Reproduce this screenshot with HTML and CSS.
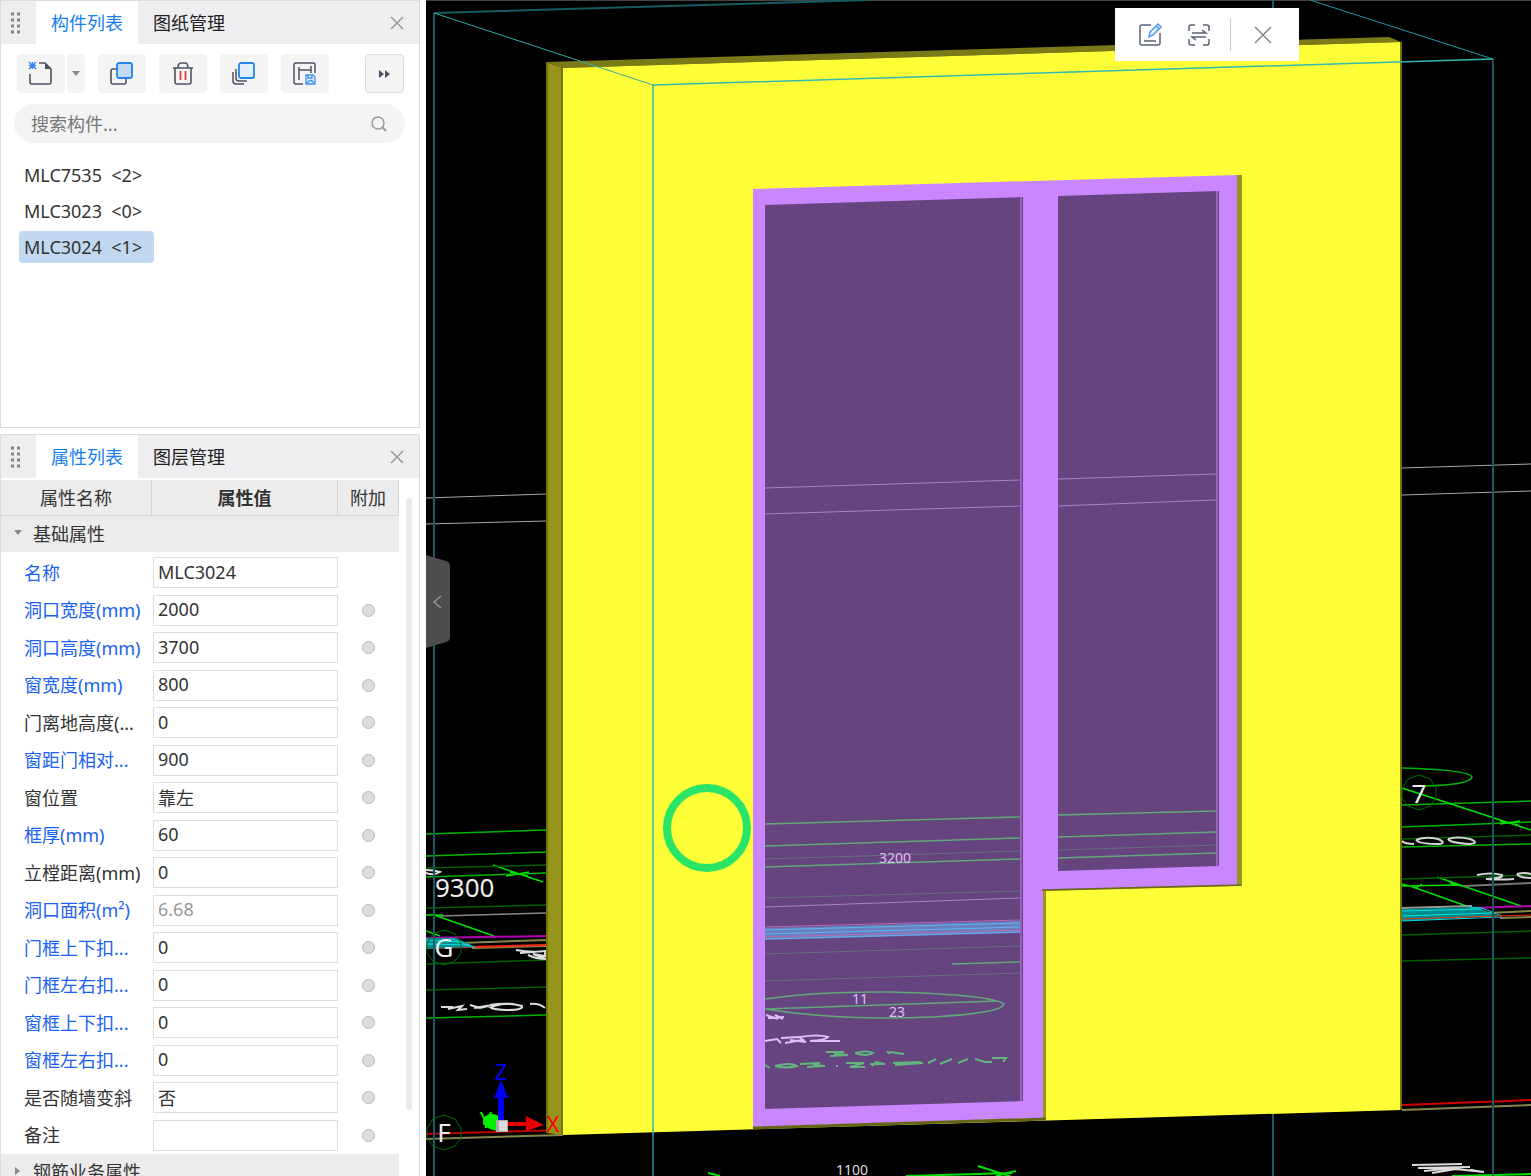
FILE: index.html
```
<!DOCTYPE html>
<html lang="zh-CN">
<head>
    <meta charset="UTF-8">
    <meta name="viewport" content="width=device-width, initial-scale=1.0">
    <title>构件列表</title>
    <link rel="stylesheet" href="styles.css">
</head>
<body>
    <div class="sidebar">
        <!-- Component list panel -->
        <section class="panel component-panel">
            <div class="tab-bar">
                <svg class="grip" width="12" height="24" viewBox="0 0 12 24"><path d="M1 3h3M7 3h3M1 9h3M7 9h3M1 15h3M7 15h3M1 21h3M7 21h3" stroke="#858585" stroke-width="3"/></svg>
                <button class="tab active">构件列表</button>
                <button class="tab">图纸管理</button>
                <button class="close-button" aria-label="关闭"><svg width="14" height="14" viewBox="0 0 14 14"><path d="M1 1l12 12M13 1L1 13" stroke="#999" stroke-width="1.5"/></svg></button>
            </div>
            <div class="toolbar">
                <div class="split-button">
                    <button class="tool" aria-label="新建">
                        <svg width="26" height="26" viewBox="0 0 26 26" fill="none"><path d="M2 13v8q0 2 2 2h17q2 0 2-2V8l-6-6h-6" stroke="#4d5363" stroke-width="1.6"/><path d="M17 2v6h6z" fill="#4d5363"/><path d="M1 1l7 7M8 1L1 8M4.500 1v7M1 4.500h7" stroke="#2f86ee" stroke-width="1.300"/></svg>
                    </button>
                    <button class="tool arrow" aria-label="更多新建"><svg width="8" height="5" viewBox="0 0 8 5"><path d="M0 0h8L4 5z" fill="#8a8a8a"/></svg></button>
                </div>
                <button class="tool" aria-label="复制">
                    <svg width="26" height="26" viewBox="0 0 26 26" fill="none"><rect x="2" y="8" width="15" height="15" rx="2" stroke="#4d5363" stroke-width="1.600"/><rect x="8" y="2" width="15" height="15" rx="2" fill="#c5d9f3" stroke="#2384ee" stroke-width="1.800"/></svg>
                </button>
                <button class="tool" aria-label="删除">
                    <svg width="26" height="26" viewBox="0 0 26 26" fill="none"><path d="M3 7h20M8 7q0-5 3-5h4q3 0 3 5M5 7v14q0 2 2 2h12q2 0 2-2V7" stroke="#4d5363" stroke-width="1.600"/><path d="M10.500 10v9M15.500 10v9" stroke="#e33e45" stroke-width="1.800"/></svg>
                </button>
                <button class="tool" aria-label="层间复制">
                    <svg width="26" height="26" viewBox="0 0 26 26" fill="none"><path d="M2 11v9q0 3 3 3h8M5 8v9q0 3 3 3h8" stroke="#4d5363" stroke-width="1.500"/><rect x="8" y="2" width="15" height="15" rx="2" fill="#e3effc" stroke="#2384ee" stroke-width="1.800"/></svg>
                </button>
                <button class="tool" aria-label="存档">
                    <svg width="26" height="26" viewBox="0 0 26 26" fill="none"><path d="M11 23H4q-2 0-2-2V4q0-2 2-2h17q2 0 2 2v8M7 6v13M19 5v7M7 9h12" stroke="#4d5363" stroke-width="1.500"/><path d="M14 14h7l2 2v7h-9zM16 14v3h4v-3M15 22q4-5 7 0" fill="#dcebfd" stroke="#3f91f0" stroke-width="1.300"/></svg>
                </button>
                <button class="tool more" aria-label="展开"><svg width="12" height="8" viewBox="0 0 12 8"><path d="M0 0l5 4-5 4zM6 0l5 4-5 4z" fill="#4b5060"/></svg></button>
            </div>
            <div class="search">
                <input type="text" class="search-input" placeholder="搜索构件..." aria-label="搜索构件">
                <svg width="16" height="16" viewBox="0 0 16 16" fill="none"><circle cx="7" cy="7" r="6" stroke="#999" stroke-width="1.500"/><path d="M11 11l4 4" stroke="#999" stroke-width="2"/></svg>
            </div>
            <ul class="component-list">
                <li>MLC7535&nbsp; &lt;2&gt;</li>
                <li>MLC3023&nbsp; &lt;0&gt;</li>
                <li class="selected">MLC3024&nbsp; &lt;1&gt;</li>
            </ul>
        </section>

        <!-- Property panel -->
        <section class="panel property-panel">
            <div class="tab-bar">
                <svg class="grip" width="12" height="24" viewBox="0 0 12 24"><path d="M1 3h3M7 3h3M1 9h3M7 9h3M1 15h3M7 15h3M1 21h3M7 21h3" stroke="#858585" stroke-width="3"/></svg>
                <button class="tab active">属性列表</button>
                <button class="tab">图层管理</button>
                <button class="close-button" aria-label="关闭"><svg width="14" height="14" viewBox="0 0 14 14"><path d="M1 1l12 12M13 1L1 13" stroke="#999" stroke-width="1.5"/></svg></button>
            </div>
            <div class="property-body">
                <table class="properties">
                    <colgroup><col class="col-name"><col class="col-value"><col class="col-extra"></colgroup>
                    <thead>
                        <tr><th>属性名称</th><th class="strong">属性值</th><th>附加</th></tr>
                        <tr class="group"><td colspan="3"><svg width="8" height="8" viewBox="0 0 8 8"><path d="M0 1h8L4 6z" fill="#888"/></svg>基础属性</td></tr>
                    </thead>
                    <tbody>
                        <tr><td><label class="blue" for="p1">名称</label></td><td><input type="text" id="p1" value="MLC3024"></td><td></td></tr>
                        <tr><td><label class="blue" for="p2">洞口宽度(mm)</label></td><td><input type="text" id="p2" value="2000"></td><td><input type="checkbox" aria-label="附加 洞口宽度"></td></tr>
                        <tr><td><label class="blue" for="p3">洞口高度(mm)</label></td><td><input type="text" id="p3" value="3700"></td><td><input type="checkbox" aria-label="附加 洞口高度"></td></tr>
                        <tr><td><label class="blue" for="p4">窗宽度(mm)</label></td><td><input type="text" id="p4" value="800"></td><td><input type="checkbox" aria-label="附加 窗宽度"></td></tr>
                        <tr><td><label for="p5">门离地高度(...</label></td><td><input type="text" id="p5" value="0"></td><td><input type="checkbox" aria-label="附加 门离地高度"></td></tr>
                        <tr><td><label class="blue" for="p6">窗距门相对...</label></td><td><input type="text" id="p6" value="900"></td><td><input type="checkbox" aria-label="附加 窗距门相对"></td></tr>
                        <tr><td><label for="p7">窗位置</label></td><td><input type="text" id="p7" value="靠左"></td><td><input type="checkbox" aria-label="附加 窗位置"></td></tr>
                        <tr><td><label class="blue" for="p8">框厚(mm)</label></td><td><input type="text" id="p8" value="60"></td><td><input type="checkbox" aria-label="附加 框厚"></td></tr>
                        <tr><td><label for="p9">立樘距离(mm)</label></td><td><input type="text" id="p9" value="0"></td><td><input type="checkbox" aria-label="附加 立樘距离"></td></tr>
                        <tr><td><label class="blue" for="p10">洞口面积(m²)</label></td><td><input type="text" id="p10" class="readonly" value="6.68" readonly></td><td><input type="checkbox" aria-label="附加 洞口面积"></td></tr>
                        <tr><td><label class="blue" for="p11">门框上下扣...</label></td><td><input type="text" id="p11" value="0"></td><td><input type="checkbox" aria-label="附加 门框上下扣"></td></tr>
                        <tr><td><label class="blue" for="p12">门框左右扣...</label></td><td><input type="text" id="p12" value="0"></td><td><input type="checkbox" aria-label="附加 门框左右扣"></td></tr>
                        <tr><td><label class="blue" for="p13">窗框上下扣...</label></td><td><input type="text" id="p13" value="0"></td><td><input type="checkbox" aria-label="附加 窗框上下扣"></td></tr>
                        <tr><td><label class="blue" for="p14">窗框左右扣...</label></td><td><input type="text" id="p14" value="0"></td><td><input type="checkbox" aria-label="附加 窗框左右扣"></td></tr>
                        <tr><td><label for="p15">是否随墙变斜</label></td><td><input type="text" id="p15" value="否"></td><td><input type="checkbox" aria-label="附加 是否随墙变斜"></td></tr>
                        <tr><td><label for="p16">备注</label></td><td><input type="text" id="p16" value=""></td><td><input type="checkbox" aria-label="附加 备注"></td></tr>
                    </tbody>
                    <tfoot>
                        <tr class="group"><td colspan="3"><svg width="8" height="8" viewBox="0 0 8 8"><path d="M1 0v8l5-4z" fill="#888"/></svg>钢筋业务属性</td></tr>
                    </tfoot>
                </table>
                <div class="scrollbar"></div>
            </div>
        </section>
    </div>

    <!-- 3D view -->
    <main class="viewport">
        <svg class="scene" viewBox="426 0 1105 1176" preserveAspectRatio="xMinYMin slice" fill="none">
            <!-- Level lines behind the wall -->
            <path d="M426 .5H1531" stroke="#444"/>
            <path d="M426 498l120-4M426 524l120-3M1402 468l129-4M1402 495l129-4" stroke="#aaa"/>

            <!-- Axis grid, left of the wall -->
            <g stroke="#00b400" stroke-width="1.500">
                <path d="M426 834l120-4M426 856l120-4M426 877l120-4M426 1018l120-3"/>
                <path d="M493 865l50 17M506 876l23-4M510 872l18 4M426 915l17 0M434 915l60 21M426 931l14 5" stroke="#00e000"/>
                <path d="M426 868l120-3M426 908l120-3M426 964l120-4M426 990l120-3" stroke="#006000"/>
            </g>
            <path d="M440 916l106-3" stroke="#888" stroke-width="1.500"/>
            <path d="M426 938l120-2" stroke="#b400b4" stroke-width="2"/>
            <path d="M460 943l86-3M472 948l74-2" stroke="#85854d" stroke-width="2"/>
            <path d="M426 948l120-3" stroke="#f52a10" stroke-width="2"/>
            <path d="M426 938l30 0 20 9-50 2z" fill="#008c8c"/>
            <path d="M426 940l36 2M426 944l44 1M450 938l25 10" stroke="#00dede"/>
            <path d="M426 870q8 0 14 2-6 4-14 1M516 950q14 3 30 1M520 953l26-2M528 955q8 4 18 4M545 950v6l-12-2 13 5" stroke="#ddd" stroke-width="2"/>
            <path d="M441 1007l12 0-5 2 14-3-4 4 9-1M470 1005l10 3 8-2 5 3M474 1008l18-3M490 1005q18-3 32 1 2 4-16 4-20-1-12-4 10-3 20-2M530 1004q9-1 15 4" stroke="#ddd" stroke-width="2"/>

            <!-- Axis grid, right of the wall -->
            <g stroke="#00b400" stroke-width="1.500">
                <path d="M1402 768q68 2 70 9-2 8-48 9M1402 805l129-4M1402 827l129-5M1402 847l129-3"/>
                <path d="M1402 788l129 42M1500 824l20-3M1500 821l18 4M1402 886l56-1M1402 884l14 4 6-4M1410 886l62 22M1437 877l84 29M1450 883l16 4" stroke="#00e000"/>
                <path d="M1402 839l129-4M1402 879l129-4M1402 935l129-4M1402 961l129-3" stroke="#006000"/>
            </g>
            <path d="M1464 886l67-3" stroke="#777" stroke-width="2"/>
            <path d="M1402 908l70-2" stroke="#999" stroke-width="2"/>
            <path d="M1472 908l59-2" stroke="#b400b4" stroke-width="2"/>
            <path d="M1488 913l43-2M1500 918l31-1" stroke="#85854d" stroke-width="2"/>
            <path d="M1402 909l74-2 23 9-97 5z" fill="#008c8c"/>
            <path d="M1402 911l80-2M1402 916l90-3M1402 921l99-4M1470 907l12 1 20 8" stroke="#00dede"/>
            <path d="M1402 919l129-4" stroke="#f52a10"/>
            <path d="M1402 841q3 3 12 3M1416 840q9-4 22-1 9 4 1 5-20 0-23-4M1448 839q9-3 22 0 10 4 0 5-20-1-22-5M1477 875q14-3 25 0 2 3-16 4 14 1 28 0M1517 874q8-2 14 0M1517 874q2 4 14 4" stroke="#d5d5d5" stroke-width="2"/>
            <path d="M1402 1105l129-5" stroke="#d00000" stroke-width="2"/>
            <path d="M1402 1110l129-5M426 1139l137-4" stroke="#85854d" stroke-width="2"/>
            <path d="M426 1134l137-4" stroke="#c00000" stroke-width="2"/>
            <path d="M1412 1165l50-1M1418 1168l52-1M1424 1171l40-4M1432 1173l24-4 28 3M1470 1170l14 2" stroke="#ddd" stroke-width="2"/>
            <path d="M1452 1176l79-2" stroke="#00e000" stroke-width="2"/>

            <!-- Back edges of the selection box -->
            <path d="M434 13L870 0M434 13V1176M1493 59V1176M1273 0v1176" stroke="#175b61" stroke-width="2"/>
            <path d="M1310 0l183 59" stroke="#239aa5"/>

            <!-- Wall -->
            <path d="M546 62l843-25 12 5-838 26z" fill="#7a7a18"/>
            <path d="M546 62l17 6v1067l-17-2z" fill="#95951e"/>
            <path d="M563 68l838-26v1068l-838 25z" fill="#ffff37"/>
            <path d="M547 63v1070M562 68v1067M1401 42v1068" stroke="#757500" stroke-width="2"/>

            <!-- Door and window frame -->
            <path d="M1237 175h5v711l-196 5v228l-4 0V889l195-5z" fill="#95951e"/>
            <path d="M753 189l484-14v710l-194 5v228l-290 9z" fill="#c986ff"/>
            <path d="M1042 890l199-5" stroke="#66661a" stroke-width="1.500"/>
            <path d="M753 1128l293-9" stroke="#66661a" stroke-width="3"/>
            <path d="M765 205l258-8v904l-258 8zM1058 196l161-5v675l-161 5z" fill="#664480"/>
            <path d="M1021 197v904M1217 191v675" stroke="#9363bb" stroke-width="2"/>

            <!-- Grid seen through the glass -->
            <path d="M765 488l255-8M765 514l255-8M1058 479l158-5M1058 506l158-6M765 907l255-9" stroke="#ae82c5"/>
            <path d="M765 824l255-7M765 846l255-8M765 867l255-8M1058 815l158-4M1058 837l158-5M1058 858l158-5M952 964l68-2" stroke="#61a878" stroke-width="1.500"/>
            <path d="M765 859l255-8M765 898l255-7M765 954l255-8M765 981l255-8M1058 850l158-5" stroke="#64717e"/>
            <path d="M765 928l255-7v12l-255 7z" fill="#6780bd"/>
            <path d="M765 930l255-7M765 934l255-7M765 939l255-7" stroke="#62b2ef"/>
            <path d="M765 927l255-7M765 937l255-7" stroke="#bd68b1"/>
            <path d="M765 999q54-8 128-7 100 3 111 12-2 9-72 13-92 4-167-8M765 1009l232-8" stroke="#61a878" stroke-width="1.500"/>
            <g class="ground-text" fill="#e1bdf5" text-anchor="middle">
                <text x="895" y="863">3200</text>
                <text x="860" y="1004">11</text>
                <text x="897" y="1017">23</text>
            </g>
            <path d="M766 1015l12 4M768 1018l16-1M775 1015l8 4M765 1041l12-2 4 4M781 1038l18-1 4 3-18 3M800 1037q18-3 28 0-2 3-18 4h30M790 1040l16 2" stroke="#e1bdf5" stroke-width="2"/>
            <path d="M826 1052h18l-10 2 14 1-18 1M855 1053q12-3 18 0-6 4-18 0M887 1051l3 3M890 1052l14 2M765 1065l5 3M775 1066q16-4 22 0-12 3-22 0M800 1064l20-1-7 2 12 1-18 1M836 1066l2 0M846 1063h18l-14 4h15M870 1064h15l-9-2-4 4M893 1063l28-1M895 1065l28-2M928 1063l8-4M940 1064l12-5M958 1063l10-4M975 1059l10 3h7M992 1058h14l-3 4" stroke="#61b57c" stroke-width="2"/>

            <!-- Front edges of the selection box -->
            <path d="M434 13l219 72" stroke="#35a8a8"/>
            <path d="M653 85l840-26M653 85v1050" stroke="#35b8b0" stroke-width="1.500"/>
            <path d="M653 1135v41" stroke="#1b6c74" stroke-width="2"/>

            <circle cx="707" cy="828" r="40" stroke="#29e467" stroke-width="8"/>

            <!-- Axis bubbles -->
            <g stroke="#006f00">
                <path d="M444 930l11 4 6 9v10l-6 8-11 4-11-4-6-8v-10l6-9zM444 1115l11 4 6 9v10l-6 8-11 4-11-4-6-8v-10l6-9zM1419 775l11 4 6 9v10l-6 8-11 4-11-4-6-8v-10l6-9z"/>
            </g>
            <g class="axis-text" fill="#eee">
                <text x="435" y="897">9300</text>
                <text x="444" y="957" text-anchor="middle">G</text>
                <text x="444" y="1142" text-anchor="middle">F</text>
                <text x="1419" y="803" text-anchor="middle">7</text>
            </g>
            <text class="ground-text" x="852" y="1175" fill="#ddd" text-anchor="middle">1100</text>
            <path d="M708 1173l12 3M906 1176l106-3M978 1166l34 11M996 1176l20-5" stroke="#00e000" stroke-width="2"/>

            <!-- Coordinate axes -->
            <path d="M483 1118q8-7 16-2v14q-8 2-16-6z" fill="#00f000"/>
            <path d="M501 1080l7 18h-4v25h-6v-25h-4z" fill="#0000f5"/>
            <path d="M504 1122h22v-6l18 9-18 6v-5h-22z" fill="#e80000"/>
            <path d="M496 1120h12v12h-12z" fill="#aaa"/>
            <path d="M499 1121h8v10h-8z" fill="#ddd"/>
            <g class="axis-label" text-anchor="middle">
                <text x="501" y="1080" fill="#0000f5">Z</text>
                <text x="553" y="1132" fill="#f00">X</text>
                <text x="486" y="1128" fill="#00f000">Y</text>
            </g>
        </svg>

        <div class="view-toolbar">
            <button aria-label="编辑"><svg width="26" height="26" viewBox="0 0 26 26" fill="none"><path d="M14 3H5Q3 3 3 5v16q0 2 2 2h16q2 0 2-2V11M7 19h12" stroke="#5b6173" stroke-width="1.500"/><path d="M12 15l1-5 8-8 3 3-8 8zM19 4l3 3" fill="#e3effc" stroke="#4b99ef" stroke-width="1.500"/></svg></button>
            <button aria-label="切换"><svg width="26" height="26" viewBox="0 0 26 26" fill="none"><path d="M3 9V5q0-2 2-2h4M17 3h4q2 0 2 2v4M23 17v4q0 2-2 2h-4M9 23H5q-2 0-2-2v-4M6 11h14l-4-3M20 15H6l4 3" stroke="#5b6173" stroke-width="1.500"/></svg></button>
            <span class="divider"></span>
            <button aria-label="关闭"><svg width="18" height="18" viewBox="0 0 18 18"><path d="M1 1l16 16M17 1L1 17" stroke="#888" stroke-width="1.500"/></svg></button>
        </div>

        <button class="collapse-handle" aria-label="收起">
            <svg width="24" height="94" viewBox="0 0 24 94" fill="none"><path d="M0 0l20 6q4 1 4 5v71q0 4-4 5L0 93z" fill="#4d4d4d"/><path d="M15 41l-7 6 7 6" stroke="#999" stroke-width="1.500"/></svg>
        </button>
    </main>
</body>
</html>
```
FILE: styles.css
```
* {
    box-sizing: border-box;
}

body {
    margin: 0;
    display: flex;
    height: 100vh;
    overflow: hidden;
    background: #fff;
    color: #333;
    font-family: "Noto Sans", "Noto Sans CJK SC", sans-serif;
    font-size: 18px;
    line-height: 24px;
}

button,
input {
    font: inherit;
    color: inherit;
}

button {
    border: none;
    padding: 0;
    background: none;
    cursor: pointer;
}

svg {
    display: block;
    flex: none;
}

/* Left column */
.sidebar {
    display: flex;
    flex-direction: column;
    flex: none;
    width: 426px;
    gap: 6px;
    padding-right: 6px;
}

.panel {
    border: 1px solid #dcdcdc;
    background: #fff;
}

.component-panel {
    flex: none;
    min-height: 428px;
}

.property-panel {
    display: flex;
    flex-direction: column;
    flex: 1;
    min-height: 0;
    overflow: hidden;
    border-bottom: none;
}

/* Tabs */
.tab-bar {
    display: flex;
    flex: none;
    height: 43px;
    background: #eeeef0;
}

.grip {
    margin: 10px 14px 0 9px;
}

.tab {
    padding: 0 15px;
    color: #222;
}

.tab.active {
    background: #fff;
    color: #187ef0;
}

.close-button {
    margin-left: auto;
    padding: 0 15px;
}

/* Component tools */
.toolbar {
    display: flex;
    gap: 13px;
    padding: 10px 15px 11px 16px;
}

.split-button {
    display: flex;
    gap: 2px;
}

.tool {
    display: flex;
    align-items: center;
    justify-content: center;
    width: 48px;
    height: 39px;
    border-radius: 4px;
    background: #f4f4f4;
}

.tool.arrow {
    width: 18px;
}

.tool.more {
    width: 39px;
    margin-left: auto;
    border: 1px solid #ddd;
}

.search {
    display: flex;
    align-items: center;
    height: 39px;
    margin: 0 14px 0 13px;
    padding: 0 18px 0 17px;
    border-radius: 20px;
    background: #f4f4f4;
}

.search-input {
    flex: 1;
    min-width: 0;
    padding: 0;
    border: none;
    outline: none;
    background: none;
}

.search-input::placeholder {
    color: #777;
}

.component-list {
    display: flex;
    flex-direction: column;
    align-items: flex-start;
    gap: 4px;
    margin: 16px 0 0;
    padding: 0 18px;
    list-style: none;
}

.component-list li {
    min-width: 135px;
    padding: 4px 7px 4px 5px;
    border-radius: 4px;
}

.component-list .selected {
    background: #c1d8f0;
}

/* Property table */
.property-body {
    display: flex;
    flex: 1;
    gap: 7px;
    min-height: 0;
    padding-top: 2px;
}

.properties {
    width: 398px;
    table-layout: fixed;
    border-collapse: separate;
    border-spacing: 0;
    align-self: flex-start;
}

.col-name {
    width: 151px;
}

.col-extra {
    width: 61px;
}

.properties th {
    height: 36px;
    padding: 0;
    border-right: 1px solid #d5d5d5;
    border-bottom: 1px solid #d5d5d5;
    background: #ececec;
    font-weight: normal;
}

.properties th.strong {
    font-weight: bold;
}

.properties td {
    padding: 0;
    white-space: nowrap;
}

.properties .group td {
    height: 38px;
    padding-left: 32px;
    border-bottom: 2px solid #fff;
    background: #ececec;
}

.group svg {
    float: left;
    margin: 7px 0 0 -19px;
}

.properties tbody tr:nth-child(odd) td {
    height: 37px;
}

.properties tbody tr:nth-child(even) td {
    height: 38px;
}

.properties label {
    padding-left: 23px;
}

.properties .blue {
    color: #1a62f2;
}

.properties input[type="text"] {
    display: block;
    width: 185px;
    height: 31px;
    margin-left: 1px;
    padding: 0 4px 2px;
    border: 1px solid #ddd;
    background: #fff;
    outline: none;
}

.properties .readonly {
    color: #999;
}

.properties input[type="checkbox"] {
    appearance: none;
    display: block;
    width: 13px;
    height: 13px;
    margin: 0 auto;
    border: 1px solid #b5b7ba;
    border-radius: 50%;
    background: #dcdddf;
}

.scrollbar {
    width: 6px;
    height: 612px;
    margin-top: 18px;
    border-radius: 3px;
    background: #eaeaea;
}

/* 3D view */
.viewport {
    position: relative;
    flex: 1;
    min-width: 0;
    background: #000;
    overflow: hidden;
}

.scene {
    width: 100%;
    height: 100%;
}

.axis-text {
    font-size: 26px;
}

.axis-label {
    font-size: 22px;
}

.ground-text {
    font-size: 14px;
}

.view-toolbar {
    position: absolute;
    top: 8px;
    right: 232px;
    display: flex;
    align-items: center;
    gap: 23px;
    height: 53px;
    padding: 0 27px 0 22px;
    background: #fff;
}

.divider {
    width: 1px;
    height: 33px;
    margin: 0 0 0 -5px;
    background: #ccc;
}

.collapse-handle {
    position: absolute;
    top: 555px;
    left: 0;
}
```
